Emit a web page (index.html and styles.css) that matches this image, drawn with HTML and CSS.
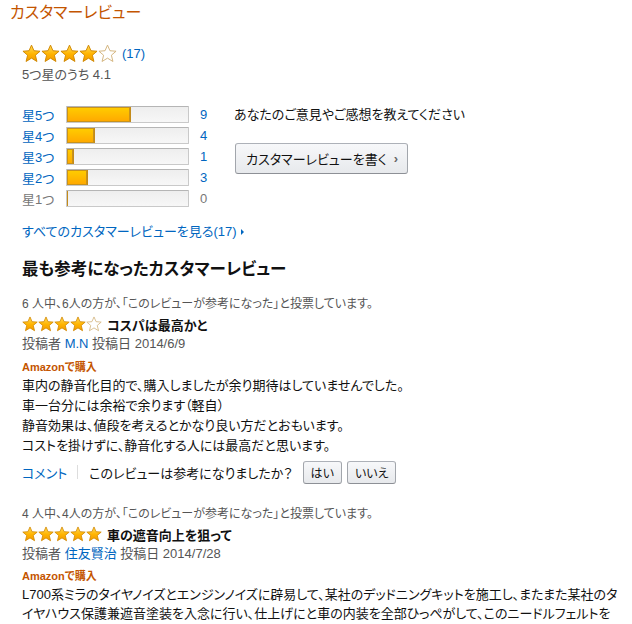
FILE: index.html
```html
<!DOCTYPE html>
<html lang="ja">
<head>
<meta charset="utf-8">
<title>カスタマーレビュー</title>
<link rel="stylesheet" href="styles.css">
</head>
<body>
<svg class="defs" width="0" height="0" aria-hidden="true">
  <defs>
    <linearGradient id="gold" x1="0" y1="0" x2="0" y2="1">
      <stop offset="0" stop-color="#ffdc5a"/>
      <stop offset="0.55" stop-color="#ffb300"/>
      <stop offset="1" stop-color="#f29a00"/>
    </linearGradient>
    <symbol id="star-full" viewBox="0 0 20 20">
      <polygon points="10,1.2 12.6,7.1 19,7.6 14.1,11.8 15.7,18.4 10,14.9 4.3,18.4 5.9,11.8 1,7.6 7.4,7.1" fill="url(#gold)" stroke="#d08700" stroke-width="1" stroke-linejoin="round"/>
    </symbol>
    <symbol id="star-empty" viewBox="0 0 20 20">
      <polygon points="10,1.2 12.6,7.1 19,7.6 14.1,11.8 15.7,18.4 10,14.9 4.3,18.4 5.9,11.8 1,7.6 7.4,7.1" fill="#fff" stroke="#d2b27a" stroke-width="1" stroke-linejoin="round"/>
    </symbol>
  </defs>
</svg>

<div class="page">
  <h2 class="title">カスタマーレビュー</h2>

  <div class="summary">
    <div class="stars-line">
      <span class="stars big">
        <svg><use href="#star-full"/></svg><svg><use href="#star-full"/></svg><svg><use href="#star-full"/></svg><svg><use href="#star-full"/></svg><svg><use href="#star-empty"/></svg>
      </span>
      <a class="link count" href="#">(17)</a>
    </div>
    <div class="avg">5つ星のうち 4.1</div>
  </div>

  <div class="hist-area">
    <div class="hist">
      <a class="hl link" href="#">星5つ</a><div class="bar"><div class="fill" style="width:53%"></div></div><a class="hn link" href="#">9</a>
      <a class="hl link" href="#">星4つ</a><div class="bar"><div class="fill" style="width:23.5%"></div></div><a class="hn link" href="#">4</a>
      <a class="hl link" href="#">星3つ</a><div class="bar"><div class="fill" style="width:5.9%"></div></div><a class="hn link" href="#">1</a>
      <a class="hl link" href="#">星2つ</a><div class="bar"><div class="fill" style="width:17.6%"></div></div><a class="hn link" href="#">3</a>
      <span class="hl dim">星1つ</span><div class="bar"><div class="fill" style="width:0%"></div></div><span class="hn dim">0</span>
    </div>
    <div class="cta">
      <div class="cta-text">あなたのご意見やご感想を教えてください</div>
      <a class="btn write" href="#">カスタマーレビューを書く<span class="chev">›</span></a>
    </div>
  </div>

  <a class="link all" href="#">すべてのカスタマーレビューを見る(17)<span class="tri"></span></a>

  <h3 class="heading">最も参考になったカスタマーレビュー</h3>

  <div class="review">
    <div class="helpful">6 人中、6人の方が、「このレビューが参考になった」と投票しています。</div>
    <div class="rtitle-line">
      <span class="stars small">
        <svg><use href="#star-full"/></svg><svg><use href="#star-full"/></svg><svg><use href="#star-full"/></svg><svg><use href="#star-full"/></svg><svg><use href="#star-empty"/></svg>
      </span>
      <span class="rtitle">コスパは最高かと</span>
    </div>
    <div class="byline">投稿者 <a class="link" href="#">M.N</a> 投稿日 2014/6/9</div>
    <div class="verified">Amazonで購入</div>
    <div class="body">車内の静音化目的で、購入しましたが余り期待はしていませんでした。<br>車一台分には余裕で余ります（軽自）<br>静音効果は、値段を考えるとかなり良い方だとおもいます。<br>コストを掛けずに、静音化する人には最高だと思います。</div>
    <div class="actions">
      <a class="link" href="#">コメント</a>
      <span class="sep"></span>
      <span class="ask">このレビューは参考になりましたか？</span>
      <a class="btn small-btn" href="#">はい</a>
      <a class="btn small-btn" href="#">いいえ</a>
    </div>
  </div>

  <div class="review second">
    <div class="helpful">4 人中、4人の方が、「このレビューが参考になった」と投票しています。</div>
    <div class="rtitle-line">
      <span class="stars small">
        <svg><use href="#star-full"/></svg><svg><use href="#star-full"/></svg><svg><use href="#star-full"/></svg><svg><use href="#star-full"/></svg><svg><use href="#star-full"/></svg>
      </span>
      <span class="rtitle">車の遮音向上を狙って</span>
    </div>
    <div class="byline">投稿者 <a class="link" href="#">住友賢治</a> 投稿日 2014/7/28</div>
    <div class="verified">Amazonで購入</div>
    <div class="body wrap">L700系ミラのタイヤノイズとエンジンノイズに辟易して、某社のデッドニングキットを施工し、またまた某社のタイヤハウス保護兼遮音塗装を入念に行い、仕上げにと車の内装を全部ひっぺがして、このニードルフェルトを</div>
  </div>
</div>
</body>
</html>
```

FILE: styles.css
```css
html, body {
  margin: 0;
  padding: 0;
  background: #fff;
}
body {
  font-family: "Liberation Sans", "Noto Sans CJK JP", sans-serif;
  font-size: 13px;
  color: #111;
  overflow: hidden;
}
.defs {
  position: absolute;
  width: 0;
  height: 0;
}
.page {
  padding: 2px 0 0 10px;
  font-feature-settings: "palt";
}
a {
  text-decoration: none;
}
.link {
  color: #0066c0;
}
.title {
  margin: 0;
  font-size: 16px;
  font-weight: normal;
  line-height: 22px;
  color: #c45500;
}
.summary {
  margin: 20px 0 0 12px;
}
.stars-line {
  display: flex;
  align-items: center;
  height: 18px;
}
.stars {
  display: inline-flex;
}
.stars.big svg {
  width: 19px;
  height: 19px;
  display: block;
}
.stars.small svg {
  width: 16px;
  height: 16px;
  display: block;
}
.count {
  margin-left: 5px;
  font-size: 13px;
}
.avg {
  margin-top: 5px;
  line-height: 16px;
  color: #555;
}
.hist-area {
  margin: 21px 0 0 12px;
  display: flex;
}
.hist {
  display: grid;
  grid-template-columns: 44px 123px 34px;
  grid-auto-rows: 21px;
  align-items: center;
}
.hl {
  font-size: 13px;
}
.hn {
  padding-left: 11px;
}
.dim {
  color: #777;
}
.bar {
  height: 17px;
  box-sizing: border-box;
  border: 1px solid #c9c9c9;
  border-top-color: #b5b5b5;
  background: linear-gradient(#eee, #f7f7f7);
  border-radius: 1px;
  overflow: hidden;
}
.fill {
  height: 100%;
  box-sizing: border-box;
  background: linear-gradient(#ffce00, #ffa700);
  border-right: 1px solid #c38b1a;
  box-shadow: inset 0 0 0 1px #c8921c;
}
.cta {
  margin-left: 11px;
  padding-top: 3px;
}
.cta-text {
  line-height: 16px;
  color: #111;
}
.btn {
  display: inline-flex;
  align-items: center;
  box-sizing: border-box;
  color: #111;
  border: 1px solid;
  border-color: #adb1b8 #a2a6ac #8d9096;
  border-radius: 3px;
  background: linear-gradient(#f7f8fa, #e7e9ec);
}
.write {
  margin-top: 20px;
  margin-left: 1px;
  height: 31px;
  padding: 0 9px 0 10px;
  font-size: 13px;
}
.chev {
  margin-left: 7px;
  font-size: 13px;
  font-weight: bold;
  color: #666;
}
.all {
  display: inline-block;
  margin: 15px 0 0 12px;
  line-height: 16px;
}
.tri {
  display: inline-block;
  margin-left: 4px;
  width: 0;
  height: 0;
  border-left: 3px solid #0066c0;
  border-top: 3px solid transparent;
  border-bottom: 3px solid transparent;
  vertical-align: 1px;
}
.heading {
  margin: 18px 0 0 12px;
  font-size: 16.5px;
  line-height: 22px;
  font-weight: bold;
  color: #111;
}
.review {
  margin: 16px 0 0 12px;
}
.review.second {
  margin-top: 22px;
}
.helpful {
  font-size: 12px;
  line-height: 16px;
  color: #555;
}
.rtitle-line {
  margin-top: 2px;
  display: flex;
  align-items: center;
  height: 20px;
}
.rtitle {
  margin-left: 5px;
  font-weight: bold;
  font-size: 13px;
  color: #111;
}
.byline {
  line-height: 20px;
  color: #555;
}
.verified {
  margin-top: 5px;
  font-size: 11px;
  line-height: 16px;
  font-weight: bold;
  color: #c45500;
}
.second .verified {
  margin-top: 4px;
}
.body {
  margin-top: 1px;
  line-height: 20px;
  color: #111;
}
.body.wrap {
  margin-right: 6px;
  line-height: 19px;
}
.actions {
  margin-top: 4px;
  height: 24px;
  display: flex;
  align-items: center;
}
.sep {
  width: 1px;
  height: 14px;
  background: #ddd;
  margin: 0 11px 0 10px;
}
.ask {
  color: #111;
}
.small-btn {
  height: 23px;
  padding: 0 7px;
  margin-left: 5px;
  font-size: 12px;
}
.ask + .small-btn {
  margin-left: 10px;
}
```
